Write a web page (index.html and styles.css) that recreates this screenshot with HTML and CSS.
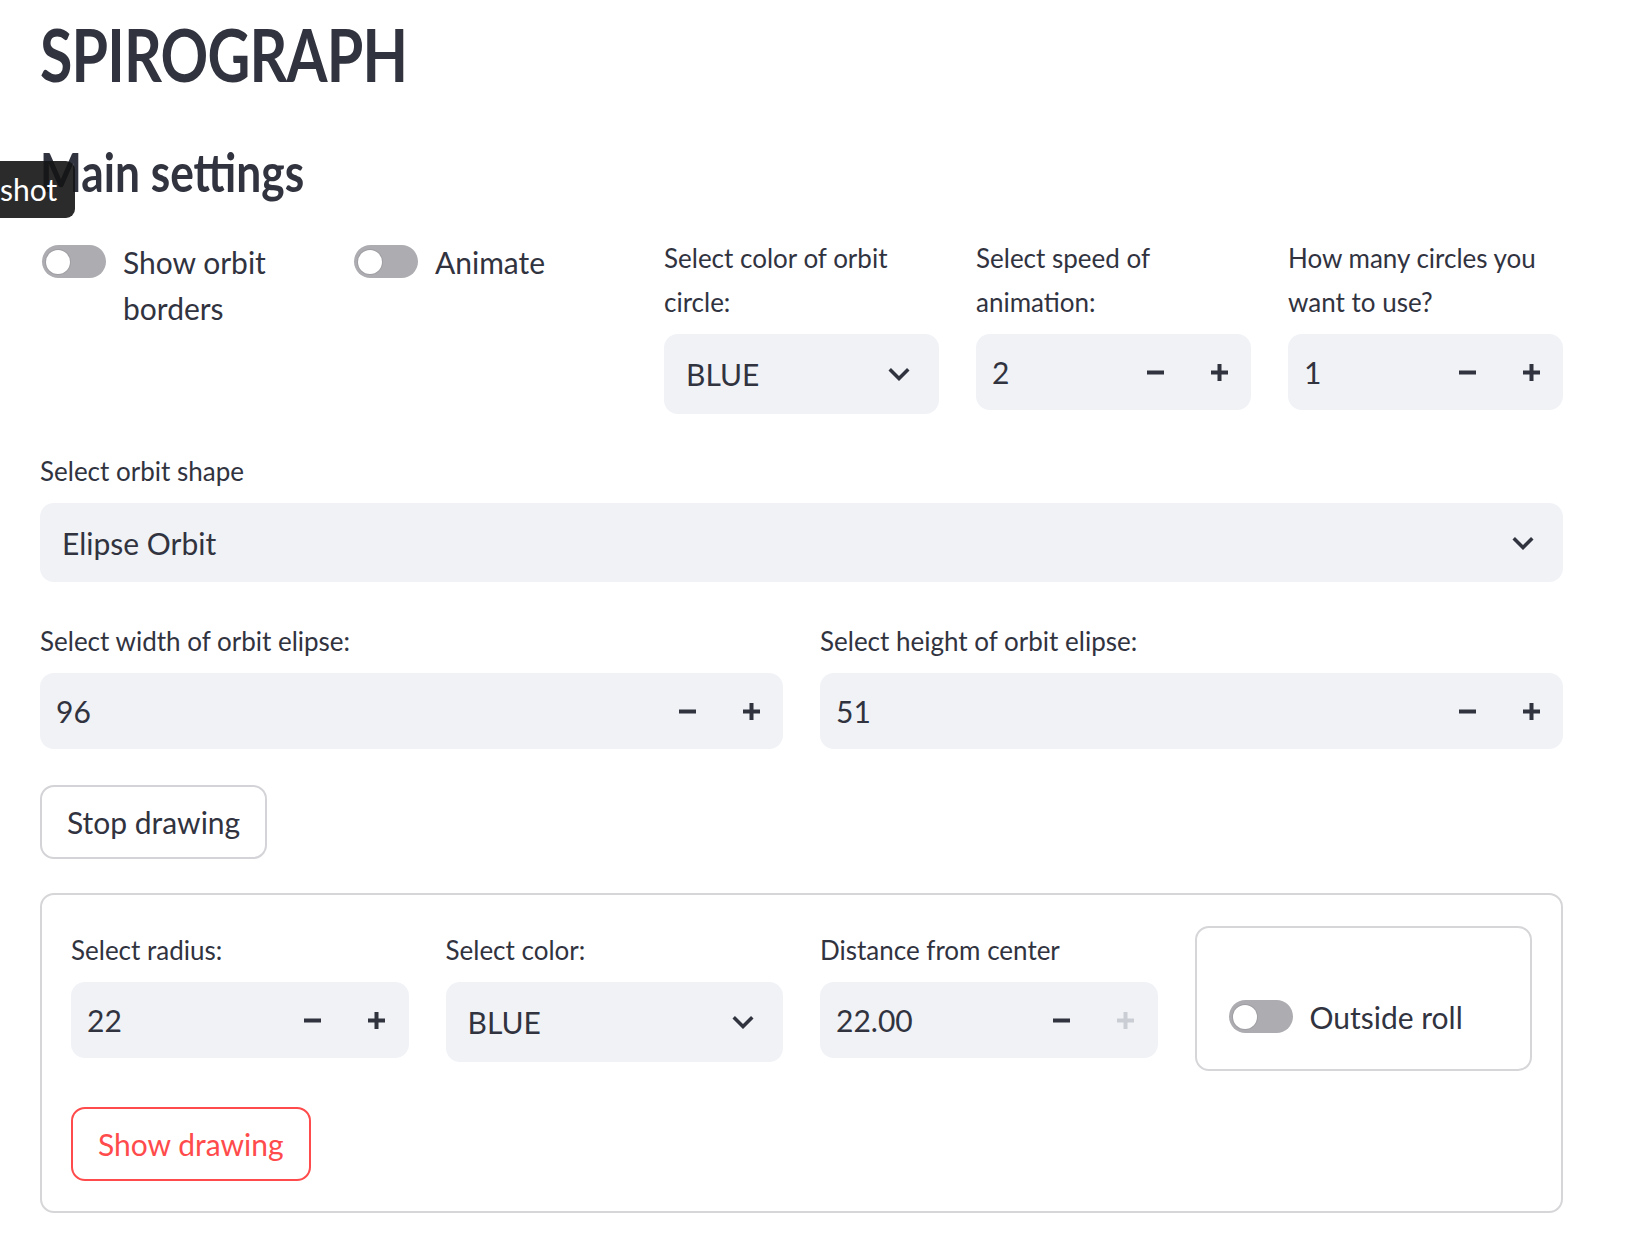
FILE: index.html
```html
<!DOCTYPE html>
<html lang="en">
<head>
<meta charset="utf-8">
<title>Spirograph</title>
<link rel="stylesheet" href="styles.css">
</head>
<body>
<div class="tooltip">shot</div>
<main class="page">
  <h1 class="title">SPIROGRAPH</h1>
  <h2 class="heading">Main settings</h2>

  <div class="row row-5">
    <div class="col col-toggle">
      <label class="toggle-row">
        <span class="switch"><span class="knob"></span></span>
        <span class="toggle-text">Show orbit borders</span>
      </label>
    </div>
    <div class="col col-toggle">
      <label class="toggle-row">
        <span class="switch"><span class="knob"></span></span>
        <span class="toggle-text">Animate</span>
      </label>
    </div>
    <div class="col">
      <div class="field-label">Select color of orbit circle:</div>
      <div class="select">
        <span class="value">BLUE</span>
        <svg class="chevron" viewBox="0 0 24 24"><path d="M16.59 8.59L12 13.170 7.41 8.59 6 10l6 6 6-6z"/></svg>
      </div>
    </div>
    <div class="col">
      <div class="field-label">Select speed of animation:</div>
      <div class="number">
        <span class="value">2</span>
        <span class="step"><svg class="icon" viewBox="0 0 17 17"><rect x="0" y="6.5" width="17" height="4"/></svg></span>
        <span class="step"><svg class="icon" viewBox="0 0 17 17"><rect x="0" y="6.5" width="17" height="4"/><rect x="6.5" y="0" width="4" height="17"/></svg></span>
      </div>
    </div>
    <div class="col">
      <div class="field-label">How many circles you want to use?</div>
      <div class="number">
        <span class="value">1</span>
        <span class="step"><svg class="icon" viewBox="0 0 17 17"><rect x="0" y="6.5" width="17" height="4"/></svg></span>
        <span class="step"><svg class="icon" viewBox="0 0 17 17"><rect x="0" y="6.5" width="17" height="4"/><rect x="6.5" y="0" width="4" height="17"/></svg></span>
      </div>
    </div>
  </div>

  <div class="row row-1">
    <div class="col">
      <div class="field-label">Select orbit shape</div>
      <div class="select">
        <span class="value">Elipse Orbit</span>
        <svg class="chevron" viewBox="0 0 24 24"><path d="M16.59 8.59L12 13.17 7.41 8.59 6 10l6 6 6-6z"/></svg>
      </div>
    </div>
  </div>

  <div class="row row-2">
    <div class="col">
      <div class="field-label">Select width of orbit elipse:</div>
      <div class="number">
        <span class="value">96</span>
        <span class="step"><svg class="icon" viewBox="0 0 17 17"><rect x="0" y="6.5" width="17" height="4"/></svg></span>
        <span class="step"><svg class="icon" viewBox="0 0 17 17"><rect x="0" y="6.5" width="17" height="4"/><rect x="6.5" y="0" width="4" height="17"/></svg></span>
      </div>
    </div>
    <div class="col">
      <div class="field-label">Select height of orbit elipse:</div>
      <div class="number">
        <span class="value">51</span>
        <span class="step"><svg class="icon" viewBox="0 0 17 17"><rect x="0" y="6.5" width="17" height="4"/></svg></span>
        <span class="step"><svg class="icon" viewBox="0 0 17 17"><rect x="0" y="6.5" width="17" height="4"/><rect x="6.5" y="0" width="4" height="17"/></svg></span>
      </div>
    </div>
  </div>

  <div class="btn-row">
    <button class="btn" type="button">Stop drawing</button>
  </div>

  <section class="panel">
    <div class="row row-4">
      <div class="col">
        <div class="field-label">Select radius:</div>
        <div class="number">
          <span class="value">22</span>
          <span class="step"><svg class="icon" viewBox="0 0 17 17"><rect x="0" y="6.5" width="17" height="4"/></svg></span>
          <span class="step"><svg class="icon" viewBox="0 0 17 17"><rect x="0" y="6.5" width="17" height="4"/><rect x="6.5" y="0" width="4" height="17"/></svg></span>
        </div>
      </div>
      <div class="col">
        <div class="field-label">Select color:</div>
        <div class="select">
          <span class="value">BLUE</span>
          <svg class="chevron" viewBox="0 0 24 24"><path d="M16.59 8.59L12 13.17 7.41 8.59 6 10l6 6 6-6z"/></svg>
        </div>
      </div>
      <div class="col">
        <div class="field-label">Distance from center</div>
        <div class="number">
          <span class="value">22.00</span>
          <span class="step"><svg class="icon" viewBox="0 0 17 17"><rect x="0" y="6.5" width="17" height="4"/></svg></span>
          <span class="step step-disabled"><svg class="icon" viewBox="0 0 17 17"><rect x="0" y="6.5" width="17" height="4"/><rect x="6.5" y="0" width="4" height="17"/></svg></span>
        </div>
      </div>
      <div class="col">
        <div class="toggle-box">
          <label class="toggle-row">
            <span class="switch"><span class="knob"></span></span>
            <span class="toggle-text">Outside roll</span>
          </label>
        </div>
      </div>
    </div>
    <div class="btn-row btn-row-inner">
      <button class="btn btn-active" type="button">Show drawing</button>
    </div>
  </section>
</main>
</body>
</html>
```

FILE: styles.css
```css
* {
  box-sizing: border-box;
}

html,
body {
  margin: 0;
  padding: 0;
  background: #ffffff;
}

body {
  font-family: "Source Sans Pro", Lato, "Noto Sans", sans-serif;
  color: #31333f;
  font-size: 30px;
  line-height: 46px;
}

.page {
  width: 1628px;
  padding: 0 65px 40px 40px;
}

.title {
  margin: 11px 0 0;
  font-size: 72px;
  font-weight: 700;
  line-height: 1.2;
  letter-spacing: -1px;
  transform: scaleX(0.82);
  transform-origin: left center;
}

.heading {
  margin: 43px 0 0;
  font-size: 54px;
  font-weight: 700;
  line-height: 1.2;
  transform: scaleX(0.82);
  transform-origin: left center;
}

.row {
  display: grid;
  column-gap: 37px;
  align-items: start;
}

.row-5 {
  grid-template-columns: repeat(5, 1fr);
  margin-top: 31px;
}

.row-1 {
  grid-template-columns: 1fr;
  margin-top: 35px;
}

.row-2 {
  grid-template-columns: 1fr 1fr;
  margin-top: 37px;
}

.row-4 {
  grid-template-columns: repeat(4, 1fr);
}

.col {
  min-width: 0;
}

.col-toggle {
  padding-top: 3px;
}

.field-label {
  font-size: 26px;
  line-height: 44px;
  margin-bottom: 10px;
}

.select {
  height: 80px;
  background: #f0f2f6;
  border-radius: 14px;
  display: flex;
  align-items: center;
  justify-content: space-between;
  padding: 0 19px 0 22px;
}

.row-1 .select {
  height: 79px;
}

.chevron {
  width: 42px;
  height: 42px;
  fill: #31333f;
  flex: none;
}

.number {
  height: 76px;
  margin-top: 2px;
  background: #f0f2f6;
  border-radius: 14px;
  display: flex;
  align-items: center;
}

.number .value {
  flex: 1;
  padding-left: 16px;
}

.step {
  width: 64px;
  height: 100%;
  display: flex;
  align-items: center;
  justify-content: center;
  flex: none;
}

.icon {
  width: 17px;
  height: 17px;
  fill: #31333f;
}

.step-disabled .icon {
  fill: #cacdd4;
}

.toggle-row {
  display: flex;
  align-items: flex-start;
  gap: 17px;
}

.switch {
  position: relative;
  flex: none;
  width: 64px;
  height: 33px;
  margin: 6px 0 0 2px;
  border-radius: 17px;
  background: #acacb1;
}

.knob {
  position: absolute;
  left: 4px;
  top: 4.5px;
  width: 24px;
  height: 24px;
  border-radius: 50%;
  background: #ffffff;
  box-shadow: 0 0 0 1px rgba(0, 0, 0, 0.08);
}

.btn-row {
  margin-top: 36px;
}

.btn {
  height: 74px;
  padding: 0 25px;
  border: 2px solid #d4d4d8;
  border-radius: 14px;
  background: #ffffff;
  font: inherit;
  color: inherit;
  line-height: 46px;
}

.btn-active {
  border-color: #ff4b4b;
  color: #ff4b4b;
}

.panel {
  margin-top: 34px;
  border: 2px solid #d6d6d9;
  border-radius: 14px;
  padding: 31px 29px 30px 29px;
}

.panel .field-label {
  margin-top: 2px;
}

.toggle-box {
  height: 145px;
  border: 2px solid #d6d6d9;
  border-radius: 14px;
  padding: 66px 20px 29px 32px;
}

.toggle-box .switch {
  margin-left: 0;
}

.btn-row-inner {
  margin-top: 36px;
}

.tooltip {
  position: absolute;
  left: 0;
  top: 161px;
  z-index: 10;
  height: 57px;
  padding: 0 18px 0 0;
  border-radius: 0 9px 9px 0;
  background: rgba(20, 20, 20, 0.9);
  color: #ffffff;
  font-family: "Source Sans Pro", Lato, "Noto Sans", sans-serif;
  font-size: 30px;
  line-height: 57px;
}
```
